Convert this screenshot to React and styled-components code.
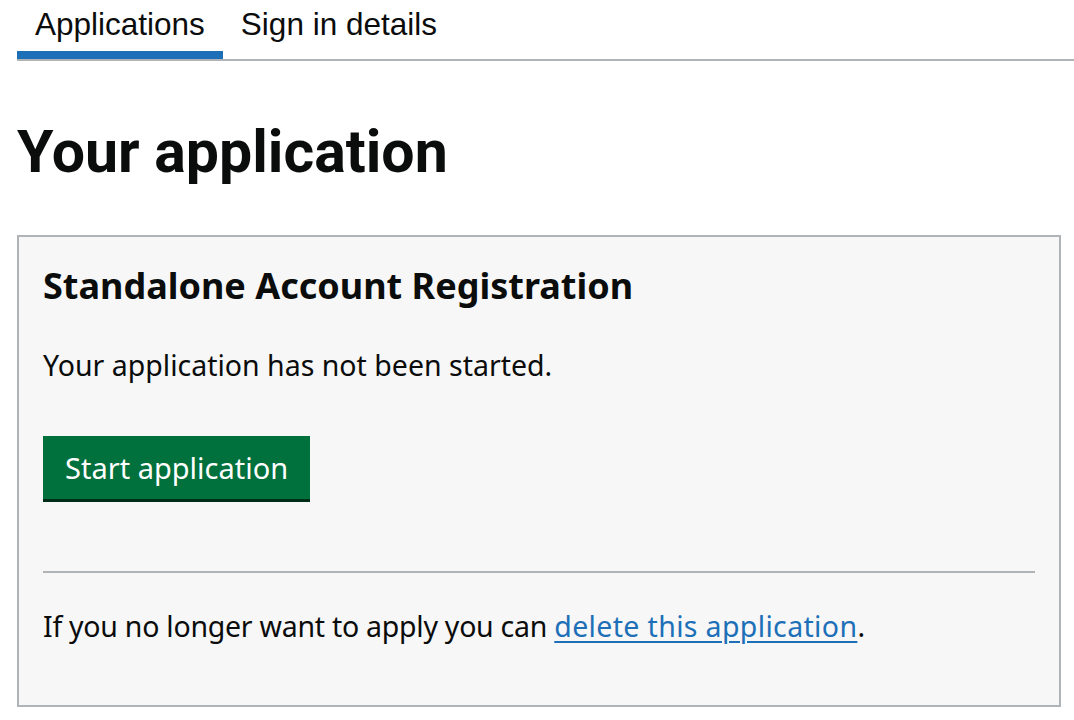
import React from "react";
import styled, { createGlobalStyle } from "styled-components";

const GlobalStyle = createGlobalStyle`
  body {
    margin: 0;
    background: #ffffff;
    color: #0b0c0c;
    font-family: "Noto Sans", "Liberation Sans", sans-serif;
  }
`;

const Page = styled.div`
  padding-left: 17px;
`;

const TabList = styled.nav`
  display: flex;
  border-bottom: 2px solid #b1b4b6;
`;

const Tab = styled.a`
  display: block;
  padding: 6px 18px 9px;
  font-family: "Liberation Sans", Arial, sans-serif;
  font-size: 31.5px;
  line-height: 36px;
  color: #0b0c0c;
  text-decoration: none;
  border-bottom: 8px solid ${(props) => (props.selected ? "#1d70b8" : "transparent")};
`;

const Main = styled.main`
  margin-right: 13px;
`;

const Title = styled.h1`
  margin: 56px 0 47px;
  font-family: Roboto, "Noto Sans", sans-serif;
  font-weight: 700;
  font-size: 59px;
  line-height: 1.2;
`;

const Card = styled.section`
  background: #f7f7f7;
  border: 2px solid #b1b4b6;
  padding: 24px 24px 61px;
`;

const CardTitle = styled.h2`
  margin: 2px 0 0;
  font-weight: 700;
  font-size: 36px;
  line-height: 45px;
`;

const Body = styled.p`
  margin: ${(props) => props.gap || "0"};
  font-size: 28.5px;
  line-height: 36px;
  letter-spacing: ${(props) => props.tracking || "normal"};
`;

const StartButton = styled.button`
  display: inline-block;
  margin-top: 53px;
  padding: 14px 22px 13px;
  border: 0;
  border-radius: 0;
  background: #00703c;
  box-shadow: 0 3px 0 #002d18;
  color: #ffffff;
  font-family: "Noto Sans", sans-serif;
  font-size: 29px;
  line-height: 36px;
  cursor: pointer;
`;

const Divider = styled.hr`
  margin: 72px 0 0;
  border: 0;
  border-top: 2px solid #b1b4b6;
`;

const Link = styled.a`
  color: #1d70b8;
  letter-spacing: 0.35px;
  text-decoration: underline;
  text-decoration-thickness: 2px;
  text-underline-offset: 4px;
`;

export default function App() {
  return (
    <>
      <GlobalStyle />
      <Page>
        <TabList>
          <Tab href="#" selected>
            Applications
          </Tab>
          <Tab href="#">Sign in details</Tab>
        </TabList>
        <Main>
          <Title>Your application</Title>
          <Card>
            <CardTitle>Standalone Account Registration</CardTitle>
            <Body gap="39px 0 0">Your application has not been started.</Body>
            <StartButton type="button">Start application</StartButton>
            <Divider />
            <Body gap="35px 0 0" tracking="-0.26px">
              If you no longer want to apply you can{" "}
              <Link href="#">delete this application</Link>.
            </Body>
          </Card>
        </Main>
      </Page>
    </>
  );
}
